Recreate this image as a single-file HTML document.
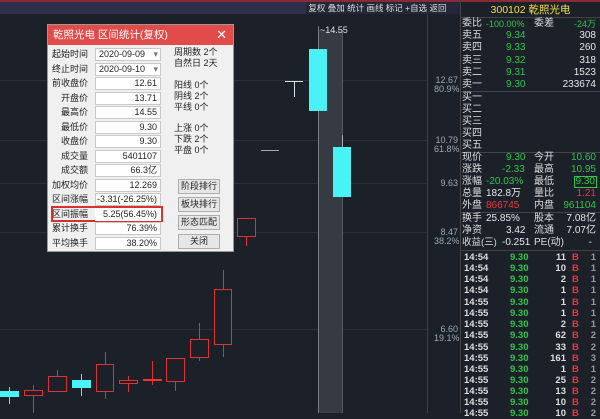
<!DOCTYPE html><html><head><meta charset="utf-8"><style>
*{margin:0;padding:0;box-sizing:border-box}
body{width:600px;height:413px;background:#1c2029;position:relative;overflow:hidden;font-family:"Liberation Sans","Noto Sans CJK SC",sans-serif;font-size:10px;color:#ddd}
.a{position:absolute}
.g{color:#2fc64a}.r{color:#e8383d}.w{color:#e6e6e6}
.hl{position:absolute;left:0;width:428px;height:1px;background:#2a2f38}
.ax{position:absolute;left:434px;width:24px;text-align:right;font-size:9px;color:#9aa;line-height:9px}
.c{position:absolute}
.dlg{position:absolute;left:47px;top:24px;width:187px;height:228px;background:#f0f0f0;border:1px solid #999}
.dt{height:20px;background:#e34a4a;color:#fff;font-size:10.5px;line-height:20px;padding-left:5px}
.lb{position:absolute;width:40px;text-align:right;left:0;font-size:9px;color:#222;line-height:13px;white-space:nowrap}
.fd{position:absolute;left:47px;width:66px;height:13px;background:#fff;border:1px solid #c8c8c8;font-size:9px;color:#222;text-align:right;padding-right:3px;line-height:11px;white-space:nowrap}
.rt{position:absolute;left:126px;font-size:9px;color:#222}
.bt{position:absolute;left:130px;width:42px;height:15px;background:#e6e6e6;border:1px solid #adadad;font-size:9px;color:#222;text-align:center;line-height:13px}
.row{position:absolute;left:462px;width:138px;height:12px;font-size:10px;line-height:12px;white-space:nowrap}
.row span{position:absolute}
.tk{position:absolute;left:464px;width:136px;height:11px;font-size:9.5px;line-height:11px;font-weight:bold}
.tk span{position:absolute}
</style></head><body>
<div class="a" style="left:0;top:0;width:600px;height:2px;background:#8a2a35"></div>
<div class="a" style="left:0;top:2px;width:460px;height:12px;background:#2e2f4a"></div>
<div class="a" style="left:306px;top:2px;width:154px;height:12px;background:#252738;font-size:8.5px;color:#ddd;line-height:12px;white-space:nowrap;overflow:hidden">&nbsp;复权 叠加 统计 画线 标记 +自选 返回</div>
<div class="hl" style="top:80px"></div><div class="hl" style="top:140px"></div><div class="hl" style="top:183px"></div><div class="hl" style="top:232px"></div><div class="hl" style="top:329px"></div>
<div class="a" style="left:427px;top:14px;width:1px;height:399px;background:#3a3f48"></div>
<div class="ax" style="top:76px">12.67<br>80.9%</div>
<div class="ax" style="top:136px">10.79<br>61.8%</div>
<div class="ax" style="top:179px">9.63</div>
<div class="ax" style="top:228px">8.47<br>38.2%</div>
<div class="ax" style="top:325px">6.60<br>19.1%</div>
<div class="a" style="left:318px;top:30px;width:24px;height:383px;background:#363a42"></div>
<div class="a" style="left:318px;top:26px;width:1px;height:387px;background:#7a8088"></div>
<div class="a" style="left:342px;top:30px;width:1px;height:383px;background:#555a62"></div>
<div class="a" style="left:320px;top:25px;font-size:9px;color:#ddd">~14.55</div>
<div class="c" style="left:309px;top:49px;width:18px;height:62px;background:#49f2f5"></div>
<div class="c" style="left:333px;top:147px;width:18px;height:50px;background:#49f2f5"></div>
<div class="c" style="left:342px;top:135px;width:1px;height:12px;background:#aaa"></div>
<div class="c" style="left:285px;top:81px;width:18px;height:1px;background:#ddd"></div>
<div class="c" style="left:294px;top:81px;width:1px;height:16px;background:#ddd"></div>
<div class="c" style="left:261px;top:150px;width:18px;height:1px;background:#aaa"></div>
<div class="c" style="left:9px;top:387px;width:1px;height:17px;background:#49f2f5"></div><div class="c" style="left:0;top:391px;width:19px;height:6px;background:#49f2f5"></div>
<div class="c" style="left:33px;top:385px;width:1px;height:28px;background:#d33"></div><div class="c" style="left:24px;top:390px;width:19px;height:6px;border:1px solid #d33;background:#1c2029"></div>
<div class="c" style="left:57px;top:370px;width:1px;height:22px;background:#d33"></div><div class="c" style="left:48px;top:376px;width:19px;height:16px;border:1px solid #d33;background:#1c2029"></div>
<div class="c" style="left:81px;top:374px;width:1px;height:22px;background:#49f2f5"></div><div class="c" style="left:72px;top:380px;width:19px;height:8px;background:#49f2f5"></div>
<div class="c" style="left:105px;top:352px;width:1px;height:47px;background:#d33"></div><div class="c" style="left:96px;top:364px;width:18px;height:28px;border:1px solid #d33;background:#1c2029"></div>
<div class="c" style="left:128px;top:376px;width:1px;height:16px;background:#d33"></div><div class="c" style="left:119px;top:380px;width:19px;height:4px;border:1px solid #d33;background:#1c2029"></div>
<div class="c" style="left:152px;top:361px;width:1px;height:24px;background:#d33"></div><div class="c" style="left:143px;top:379px;width:19px;height:2px;background:#e33"></div>
<div class="c" style="left:175px;top:382px;width:1px;height:9px;background:#d33"></div><div class="c" style="left:166px;top:358px;width:19px;height:24px;border:1px solid #d33;background:#1c2029"></div>
<div class="c" style="left:199px;top:323px;width:1px;height:38px;background:#d33"></div><div class="c" style="left:190px;top:339px;width:19px;height:19px;border:1px solid #d33;background:#1c2029"></div>
<div class="c" style="left:223px;top:270px;width:1px;height:87px;background:#d33"></div><div class="c" style="left:214px;top:289px;width:18px;height:56px;border:1px solid #d33;background:#1c2029"></div>
<div class="c" style="left:246px;top:236px;width:1px;height:10px;background:#d33"></div><div class="c" style="left:237px;top:218px;width:19px;height:19px;border:1px solid #d33;background:#1c2029"></div>
<div class="dlg"><div class="dt">乾照光电 区间统计(复权)<span style="position:absolute;right:6px;font-size:13px">✕</span></div>
<div class="lb" style="top:23px">起始时间</div><div class="fd" style="top:23px;text-align:left;padding-left:3px">2020-09-09<span style="position:absolute;right:2px;color:#777">▾</span></div>
<div class="lb" style="top:37.5px">终止时间</div><div class="fd" style="top:37.5px;text-align:left;padding-left:3px">2020-09-10<span style="position:absolute;right:2px;color:#777">▾</span></div>
<div class="lb" style="top:52px">前收盘价</div><div class="fd" style="top:52px">12.61</div>
<div class="lb" style="top:66.5px">开盘价</div><div class="fd" style="top:66.5px">13.71</div>
<div class="lb" style="top:81px">最高价</div><div class="fd" style="top:81px">14.55</div>
<div class="lb" style="top:95.5px">最低价</div><div class="fd" style="top:95.5px">9.30</div>
<div class="lb" style="top:110px">收盘价</div><div class="fd" style="top:110px">9.30</div>
<div class="lb" style="top:124.5px">成交量</div><div class="fd" style="top:124.5px">5401107</div>
<div class="lb" style="top:139px">成交额</div><div class="fd" style="top:139px">66.3亿</div>
<div class="lb" style="top:153.5px">加权均价</div><div class="fd" style="top:153.5px">12.269</div>
<div class="lb" style="top:168px">区间涨幅</div><div class="fd" style="top:168px">-3.31(-26.25%)</div>
<div class="a" style="left:3px;top:181px;width:112px;height:16px;border:2px solid #d8322e"></div>
<div class="lb" style="top:182.5px">区间振幅</div><div class="fd" style="top:182.5px;border-color:#fff">5.25(56.45%)</div>
<div class="lb" style="top:197px">累计换手</div><div class="fd" style="top:197px">76.39%</div>
<div class="lb" style="top:211.5px">平均换手</div><div class="fd" style="top:211.5px">38.20%</div>
<div class="rt" style="top:22px;line-height:11px">周期数 2个<br>自然日 2天</div>
<div class="rt" style="top:55px;line-height:11px">阳线 0个<br>阴线 2个<br>平线 0个</div>
<div class="rt" style="top:98px;line-height:11px">上涨 0个<br>下跌 2个<br>平盘 0个</div>
<div class="bt" style="top:154px">阶段排行</div>
<div class="bt" style="top:172px">板块排行</div>
<div class="bt" style="top:190px">形态匹配</div>
<div class="bt" style="top:209px">关闭</div>
</div>
<div class="a" style="left:460px;top:0;width:1px;height:413px;background:#444"></div>
<div class="a" style="left:461px;top:4px;width:139px;height:13px;color:#f0e040;font-size:10.5px;text-align:center;line-height:13px">300102 乾照光电</div>
<div class="a" style="left:461px;top:17px;width:139px;height:1px;background:#444"></div>
<div class="row" style="top:18px"><span>委比</span><span class="g" style="left:24px;font-size:9px">-100.00%</span><span style="left:72px">委差</span><span class="g" style="right:4px;font-size:9px">-24万</span></div>
<div class="row" style="top:30px"><span>卖五</span><span class="g" style="left:44px">9.34</span><span class="w" style="right:4px">308</span></div>
<div class="row" style="top:42px"><span>卖四</span><span class="g" style="left:44px">9.33</span><span class="w" style="right:4px">260</span></div>
<div class="row" style="top:55px"><span>卖三</span><span class="g" style="left:44px">9.32</span><span class="w" style="right:4px">318</span></div>
<div class="row" style="top:67px"><span>卖二</span><span class="g" style="left:44px">9.31</span><span class="w" style="right:4px">1523</span></div>
<div class="row" style="top:79px"><span>卖一</span><span class="g" style="left:44px">9.30</span><span class="w" style="right:4px">233674</span></div>
<div class="a" style="left:461px;top:91px;width:139px;height:1px;background:#444"></div>
<div class="row" style="top:92px"><span>买一</span></div>
<div class="row" style="top:104px"><span>买二</span></div>
<div class="row" style="top:116px"><span>买三</span></div>
<div class="row" style="top:128px"><span>买四</span></div>
<div class="row" style="top:140px"><span>买五</span></div>
<div class="a" style="left:461px;top:152px;width:139px;height:1px;background:#444"></div>
<div class="row" style="top:152px"><span>现价</span><span class="g" style="left:44px">9.30</span><span style="left:72px">今开</span><span class="g" style="right:4px">10.60</span></div>
<div class="row" style="top:164px"><span>涨跌</span><span class="g" style="left:40px">-2.33</span><span style="left:72px">最高</span><span class="g" style="right:4px">10.95</span></div>
<div class="row" style="top:176px"><span>涨幅</span><span class="g" style="left:24px">-20.03%</span><span style="left:72px">最低</span><span class="g" style="right:3px;border:1px solid #2fc64a;padding:0 1px;line-height:10px">9.30</span></div>
<div class="row" style="top:188px"><span>总量</span><span class="w" style="left:24px">182.8万</span><span style="left:72px">量比</span><span class="r" style="right:4px">1.21</span></div>
<div class="row" style="top:200px"><span>外盘</span><span class="r" style="left:24px">866745</span><span style="left:72px">内盘</span><span class="g" style="right:4px">961104</span></div>
<div class="a" style="left:461px;top:212px;width:139px;height:1px;background:#444"></div>
<div class="row" style="top:213px"><span>换手</span><span class="w" style="left:24px">25.85%</span><span style="left:72px">股本</span><span class="w" style="right:4px">7.08亿</span></div>
<div class="row" style="top:225px"><span>净资</span><span class="w" style="left:44px">3.42</span><span style="left:72px">流通</span><span class="w" style="right:4px">7.07亿</span></div>
<div class="row" style="top:237px"><span style="font-size:9.5px">收益(三)</span><span class="w" style="left:40px">-0.251</span><span style="left:72px">PE(动)</span><span class="w" style="right:8px">-</span></div>
<div class="a" style="left:461px;top:250px;width:139px;height:1px;background:#444"></div>
<div class="tk" style="top:252px"><span>14:54</span><span class="g" style="left:46px">9.30</span><span style="right:34px">11</span><span class="r" style="left:108px">B</span><span style="right:4px;color:#999">1</span></div>
<div class="tk" style="top:263px"><span>14:54</span><span class="g" style="left:46px">9.30</span><span style="right:34px">10</span><span class="r" style="left:108px">B</span><span style="right:4px;color:#999">1</span></div>
<div class="tk" style="top:274px"><span>14:54</span><span class="g" style="left:46px">9.30</span><span style="right:34px">2</span><span class="r" style="left:108px">B</span><span style="right:4px;color:#999">1</span></div>
<div class="tk" style="top:285px"><span>14:54</span><span class="g" style="left:46px">9.30</span><span style="right:34px">1</span><span class="r" style="left:108px">B</span><span style="right:4px;color:#999">1</span></div>
<div class="tk" style="top:297px"><span>14:55</span><span class="g" style="left:46px">9.30</span><span style="right:34px">1</span><span class="r" style="left:108px">B</span><span style="right:4px;color:#999">1</span></div>
<div class="tk" style="top:308px"><span>14:55</span><span class="g" style="left:46px">9.30</span><span style="right:34px">1</span><span class="r" style="left:108px">B</span><span style="right:4px;color:#999">1</span></div>
<div class="tk" style="top:319px"><span>14:55</span><span class="g" style="left:46px">9.30</span><span style="right:34px">2</span><span class="r" style="left:108px">B</span><span style="right:4px;color:#999">1</span></div>
<div class="tk" style="top:330px"><span>14:55</span><span class="g" style="left:46px">9.30</span><span style="right:34px">62</span><span class="r" style="left:108px">B</span><span style="right:4px;color:#999">2</span></div>
<div class="tk" style="top:342px"><span>14:55</span><span class="g" style="left:46px">9.30</span><span style="right:34px">33</span><span class="r" style="left:108px">B</span><span style="right:4px;color:#999">2</span></div>
<div class="tk" style="top:353px"><span>14:55</span><span class="g" style="left:46px">9.30</span><span style="right:34px">161</span><span class="r" style="left:108px">B</span><span style="right:4px;color:#999">3</span></div>
<div class="tk" style="top:364px"><span>14:55</span><span class="g" style="left:46px">9.30</span><span style="right:34px">1</span><span class="r" style="left:108px">B</span><span style="right:4px;color:#999">1</span></div>
<div class="tk" style="top:375px"><span>14:55</span><span class="g" style="left:46px">9.30</span><span style="right:34px">25</span><span class="r" style="left:108px">B</span><span style="right:4px;color:#999">2</span></div>
<div class="tk" style="top:386px"><span>14:55</span><span class="g" style="left:46px">9.30</span><span style="right:34px">13</span><span class="r" style="left:108px">B</span><span style="right:4px;color:#999">2</span></div>
<div class="tk" style="top:397px"><span>14:55</span><span class="g" style="left:46px">9.30</span><span style="right:34px">10</span><span class="r" style="left:108px">B</span><span style="right:4px;color:#999">2</span></div>
<div class="tk" style="top:408px"><span>14:55</span><span class="g" style="left:46px">9.30</span><span style="right:34px">10</span><span class="r" style="left:108px">B</span><span style="right:4px;color:#999">2</span></div>
</body></html>
